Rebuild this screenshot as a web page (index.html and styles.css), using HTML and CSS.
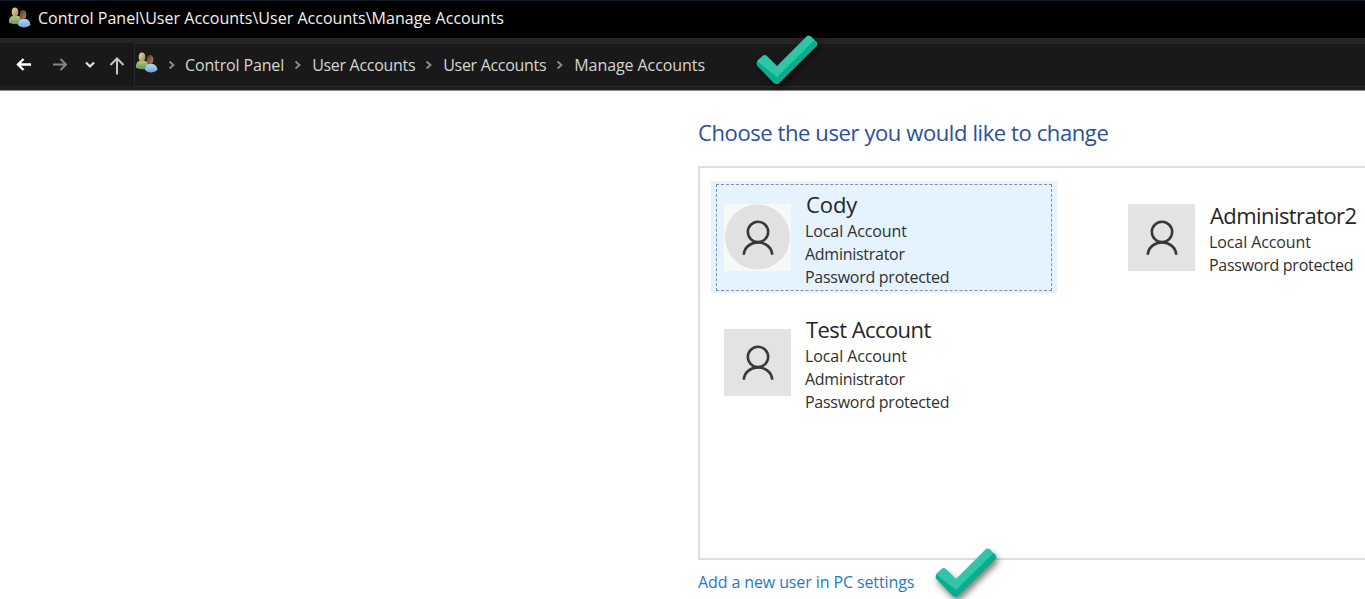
FILE: index.html
```
<!DOCTYPE html>
<html lang="en">
<head>
<meta charset="utf-8">
<title>Manage Accounts</title>
<link rel="stylesheet" href="styles.css">
</head>
<body>
<svg class="defs" width="0" height="0">
  <defs>
    <linearGradient id="skin" x1="0" y1="0" x2="1" y2="1"><stop offset="0" stop-color="#eadb9c"/><stop offset="1" stop-color="#a78652"/></linearGradient>
    <linearGradient id="skin2" x1="0" y1="0" x2="1" y2="1"><stop offset="0" stop-color="#4e3526"/><stop offset="1" stop-color="#ba8768"/></linearGradient>
    <linearGradient id="green" x1="0" y1="0" x2="0" y2="1"><stop offset="0" stop-color="#adc98c"/><stop offset="1" stop-color="#68934f"/></linearGradient>
    <linearGradient id="blue" x1="0" y1="0" x2="0" y2="1"><stop offset="0" stop-color="#b5d7f2"/><stop offset="1" stop-color="#75a5dc"/></linearGradient>
    <symbol id="users" viewBox="0 0 22 22">
      <path d="M0 16V13Q1 9 4 9H9Q12 9 12 13V17Q6 18 0 16Z" fill="url(#green)"/>
      <ellipse cx="6" cy="5" rx="3.300" ry="4.500" fill="url(#skin)"/>
      <path d="M9 18Q9 13 13 12H17Q21 13 21.500 18Q17 22 11 19.500Z" fill="url(#blue)"/>
      <ellipse cx="14" cy="7.500" rx="3.300" ry="4.500" fill="url(#skin2)"/>
    </symbol>
    <symbol id="person" viewBox="0 0 66 66">
      <g fill="none" stroke="#383838" stroke-width="2.5"><circle cx="33.5" cy="27.500" r="10"/><path d="M19.500 50C20.500 34 46.500 34 47.500 50"/></g>
    </symbol>
    <symbol id="check" viewBox="0 0 62 50">
      <path d="M1.500 25.500L7 20.500Q9 19.500 11 21L21 31L51 1Q53 0 55 1.500L60.500 7Q62 9 60.500 11L23 48Q20.500 50 18 48L1.500 31Q0 28 1.500 25.500Z" fill="#2fc6a8"/>
      <path d="M1.500 26.500L21 42L58.500 5L60.500 7Q62 9 60.500 11L23 48Q20.500 50 18 48L1.500 31Q0 28.500 1.500 26.500Z" fill="#08ad8d"/>
    </symbol>
    <symbol id="chev" viewBox="0 0 8 10"><path d="M1.500 1.500L5.500 5L1.500 8.500" fill="none" stroke="#8c8c8c" stroke-width="1.800"/></symbol>
  </defs>
</svg>
<div class="window">
  <header class="titlebar">
    <svg class="users"><use href="#users"/></svg>
    <span class="title">Control Panel\User Accounts\User Accounts\Manage Accounts</span>
  </header>
  <nav class="toolbar">
    <div class="buttons">
      <svg width="134" height="44" fill="none" stroke-width="2">
        <path d="M31 21.500H18M23.500 16L18 21.500L23.500 27" stroke="#fff" stroke-width="2.400"/>
        <path d="M53 21.500H66M60.500 16L66 21.500L60.500 27" stroke="#858585"/>
        <path d="M86 19.500L90 23.500L94 19.500" stroke="#e5e5e5" stroke-width="2.200"/>
        <path d="M117 31.500V16M110.500 22L117 15.500L123.500 22" stroke="#c5c5c5"/>
      </svg>
    </div>
    <div class="address">
      <svg class="users"><use href="#users"/></svg>
      <svg class="chev"><use href="#chev"/></svg><span class="crumb control">Control Panel</span>
      <svg class="chev"><use href="#chev"/></svg><span class="crumb">User Accounts</span>
      <svg class="chev"><use href="#chev"/></svg><span class="crumb">User Accounts</span>
      <svg class="chev"><use href="#chev"/></svg><span class="crumb manage">Manage Accounts</span>
    </div>
  </nav>
  <main class="content">
    <h1>Choose the user you would like to change</h1>
    <section class="accounts">
      <article class="account selected">
        <svg class="avatar round"><circle cx="33.500" cy="33" r="32.500" fill="#e1e1e1"/><use href="#person"/></svg>
        <div class="info"><h2 class="short">Cody</h2><p>Local Account</p><p>Administrator</p><p>Password protected</p></div>
      </article>
      <article class="account">
        <svg class="avatar"><use href="#person"/></svg>
        <div class="info"><h2>Administrator2</h2><p>Local Account</p><p>Password protected</p></div>
      </article>
      <article class="account">
        <svg class="avatar"><use href="#person"/></svg>
        <div class="info"><h2>Test Account</h2><p>Local Account</p><p>Administrator</p><p>Password protected</p></div>
      </article>
    </section>
    <a class="add">Add a new user in PC settings</a>
  </main>
  <svg class="check top"><use href="#check"/></svg>
  <svg class="check bottom"><use href="#check"/></svg>
</div>
</body>
</html>
```

FILE: styles.css
```
* { box-sizing: border-box; }
body { margin: 0; font-family: "Open Sans", "Noto Sans", sans-serif; background: #fff; }
h1, h2, p { margin: 0; font-weight: 400; white-space: nowrap; }
.defs { position: absolute; }
.window { position: relative; width: 1365px; height: 599px; overflow: hidden; }
.titlebar { height: 38px; background: #000; border-top: 1px solid #0d1a28; display: flex; align-items: center; padding: 0 0 4px 9px; color: #f2f2f2; }
.users { width: 22px; height: 22px; flex: none; }
.title { font-size: 16px; letter-spacing: .025px; margin-left: 7px; white-space: nowrap; }
.toolbar { height: 53px; background: #191919; border-top: 5px solid #242424; border-bottom: 1px solid #8c8c8c; box-shadow: inset 0 -4px #202020; display: flex; }
.buttons { width: 134px; height: 44px; }
.address { flex: 1; height: 44px; border: 1px solid #292929; border-right: 0; display: flex; align-items: center; padding: 0 0 1px 1px; color: #d5d5d5; }
.address .users { margin-bottom: 3px; }
.chev { width: 8px; height: 10px; margin: 0 10px 0 10px; flex: none; }
.crumb { font-size: 16px; letter-spacing: -.3px; white-space: nowrap; }
.control { letter-spacing: -.14px; margin-left: -1px; }
.manage { letter-spacing: -.08px; }
.content { padding: 26px 0 0 698px; display: flex; flex-direction: column; align-items: flex-start; }
h1 { font-size: 22px; line-height: 30px; letter-spacing: -.4px; color: #2b4f9c; }
.accounts { width: 680px; height: 394px; margin-top: 19px; border: 2px solid #dedede; padding: 13px 0 0 11px; display: grid; grid-template-columns: 346px 346px; grid-template-rows: 112px 112px; column-gap: 58px; row-gap: 13px; }
.account { display: flex; align-items: center; padding-left: 13px; }
.selected { position: relative; background: #e5f3ff; }
.selected::before { content: ""; position: absolute; inset: 3px 5px 2px; border: 1px dashed #8390a0; }
.avatar { width: 67px; height: 67px; background: #e3e3e3; margin-right: 14px; flex: none; }
.round { background: #f6faf6; }
.info { padding-top: 5px; color: #303030; }
h2 { font-size: 22px; line-height: 26px; letter-spacing: -.57px; margin: 0 0 3px 1px; color: #262626; }
.short { letter-spacing: -.1px; }
.info p { font-size: 16px; line-height: 23px; letter-spacing: -.27px; }
.info p:nth-child(2) { letter-spacing: -.1px; }
.add { font-size: 16px; line-height: 22px; letter-spacing: -.11px; margin-top: 11px; color: #1f78c8; white-space: nowrap; }
.check { position: absolute; width: 62px; height: 50px; filter: drop-shadow(2px 4px 3px rgba(0,0,0,.5)); overflow: visible; }
.top { left: 756px; top: 35px; }
.bottom { left: 935px; top: 548px; }
```
